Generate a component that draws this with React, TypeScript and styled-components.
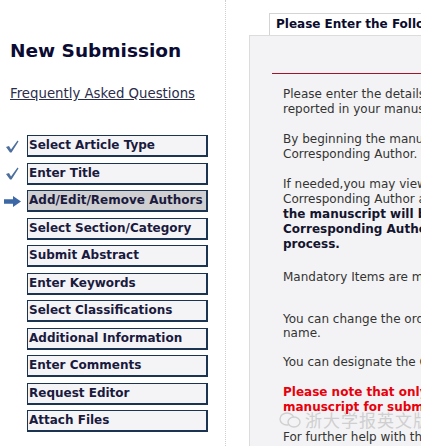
import React from 'react';
import styled, { createGlobalStyle } from 'styled-components';

const GlobalStyle = createGlobalStyle`
  html, body {
    margin: 0;
    padding: 0;
    background: #fff;
    overflow: hidden;
  }
  body {
    font-family: "DejaVu Sans", Verdana, sans-serif;
    font-size: 12px;
    color: #333;
  }
`;

type Step = { label: string; state?: 'done' | 'current' };

const steps: Step[] = [
  { label: 'Select Article Type', state: 'done' },
  { label: 'Enter Title', state: 'done' },
  { label: 'Add/Edit/Remove Authors', state: 'current' },
  { label: 'Select Section/Category' },
  { label: 'Submit Abstract' },
  { label: 'Enter Keywords' },
  { label: 'Select Classifications' },
  { label: 'Additional Information' },
  { label: 'Enter Comments' },
  { label: 'Request Editor' },
  { label: 'Attach Files' },
];

const CheckIcon = () => (
  <svg width="14" height="13" viewBox="0 0 14 13">
    <path d="M1 7 L4 6 L6 9.5 L12.5 0.5 L13.5 1.5 L6.5 12.5 L5 12.5 Z" fill="#4d6f9e" />
  </svg>
);

const ArrowIcon = () => (
  <svg width="17" height="11" viewBox="0 0 17 11">
    <path d="M0 3.3 H9 V0 L17 5.5 L9 11 V7.7 H0 Z" fill="#3d68a6" />
  </svg>
);

const App: React.FC = () => (
  <Page>
    <GlobalStyle />
    <Sidebar>
      <Heading>New Submission</Heading>
      <FaqLink href="#">Frequently Asked Questions</FaqLink>
      <StepList>
        {steps.map((s) => (
          <StepRow key={s.label}>
            <Marker>
              {s.state === 'done' && <CheckIcon />}
              {s.state === 'current' && <ArrowIcon />}
            </Marker>
            <StepButton $active={s.state === 'current'}>{s.label}</StepButton>
          </StepRow>
        ))}
      </StepList>
    </Sidebar>

    <Main>
      <Tab>Please Enter the Following</Tab>
      <Panel>
        <Rule />
        <Body>
          <Para>
            Please enter the details of all authors in the order they are
            <br />
            reported in your manuscript.
          </Para>
          <Para>
            By beginning the manuscript submission, you are listed as the
            <br />
            Corresponding Author.
          </Para>
          <Para $after={18}>
            If needed,you may view the details of the current
            <br />
            Corresponding Author and change them. <Strong>Please note that</Strong>
            <br />
            <Strong>the manuscript will be sent to the</Strong>
            <br />
            <Strong>Corresponding Author during the submission</Strong>
            <br />
            <Strong>process.</Strong>
          </Para>
          <Para $after={27}>Mandatory Items are marked with an asterisk.</Para>
          <Para $lh={14}>
            You can change the order of the authors by selecting the author
            <br />
            name.
          </Para>
          <Para>You can designate the Corresponding Author here.</Para>
          <Para $red>
            Please note that only the Corresponding Author can submit the
            <br />
            manuscript for submission.
            <Watermark>
              <WeChatMark viewBox="0 0 22 16" width="22" height="16">
                <ellipse cx="8" cy="7" rx="7" ry="6" fill="none" stroke="#d0d0d0" strokeWidth="1.4" />
                <ellipse cx="15" cy="10" rx="6" ry="5" fill="#f3f3f5" stroke="#d0d0d0" strokeWidth="1.4" />
              </WeChatMark>
              浙大学报英文版
            </Watermark>
          </Para>
          <Para>For further help with this page, please see the FAQ.</Para>
        </Body>
      </Panel>
    </Main>
  </Page>
);

export default App;

const Page = styled.div`
  display: flex;
  width: 700px;
  height: 446px;
`;

const Sidebar = styled.div`
  width: 226px;
  flex-shrink: 0;
  border-right: 1px dotted #cfcfcf;
  padding-top: 40px;
  box-sizing: border-box;
`;

const Heading = styled.h1`
  margin: 0 0 0 10px;
  font-size: 18.5px;
  font-weight: bold;
  color: #0b0b33;
  line-height: 22px;
`;

const FaqLink = styled.a`
  display: block;
  margin: 24px 0 0 10px;
  font-size: 13.3px;
  line-height: 15px;
  color: #2c2c4c;
  text-decoration: underline;
`;

const StepList = styled.div`
  display: flex;
  flex-direction: column;
  gap: 5.5px;
  margin-top: 34px;
`;

const StepRow = styled.div`
  display: flex;
  align-items: center;
`;

const Marker = styled.div`
  width: 27px;
  display: flex;
  justify-content: center;
  padding-right: 3px;
  box-sizing: border-box;
`;

const StepButton = styled.div<{ $active?: boolean }>`
  width: 181px;
  height: 22px;
  box-sizing: border-box;
  border: 1px solid #1b3452;
  border-width: 1px 2px 2px 1px;
  background: ${(p) => (p.$active ? '#cfcfd1' : '#f4f4f6')};
  color: #1a1a3e;
  font-weight: bold;
  font-size: 12px;
  line-height: 19px;
  padding-left: 1px;
  white-space: nowrap;
  overflow: hidden;
`;

const Main = styled.div`
  display: flex;
  flex-direction: column;
  padding: 13px 0 0 23px;
  flex: 1;
`;

const Tab = styled.div`
  align-self: flex-start;
  margin-left: 20px;
  height: 22px;
  box-sizing: border-box;
  padding: 0 6px;
  border: 1px solid #d4d4d4;
  border-bottom: none;
  background: #fff;
  font-weight: bold;
  font-size: 12px;
  line-height: 21px;
  color: #0b0b2e;
  white-space: nowrap;
`;

const Panel = styled.div`
  flex: 1;
  background: #f3f3f5;
  border-left: 1px solid #dcdcdc;
  border-top: 1px solid #dcdcdc;
  padding-top: 37px;
`;

const Rule = styled.div`
  margin-left: 22px;
  height: 1px;
  background: #a3142c;
`;

const Body = styled.div`
  padding: 13px 0 0 33px;
`;

const Para = styled.p<{ $after?: number; $red?: boolean; $lh?: number }>`
  position: relative;
  margin: 0 0 ${(p) => p.$after ?? 15}px;
  line-height: ${(p) => p.$lh ?? 15}px;
  white-space: nowrap;
  color: ${(p) => (p.$red ? '#e8000b' : '#333')};
  font-weight: ${(p) => (p.$red ? 'bold' : 'normal')};
`;

const Strong = styled.b`
  color: #14142e;
`;

const Watermark = styled.span`
  position: absolute;
  left: -4px;
  top: 25px;
  display: flex;
  align-items: center;
  gap: 4px;
  font-family: "Noto Sans CJK SC", sans-serif;
  font-size: 17px;
  font-weight: normal;
  line-height: 20px;
  color: #cfcfcf;
  letter-spacing: 1px;
`;

const WeChatMark = styled.svg`
  display: block;
`;
